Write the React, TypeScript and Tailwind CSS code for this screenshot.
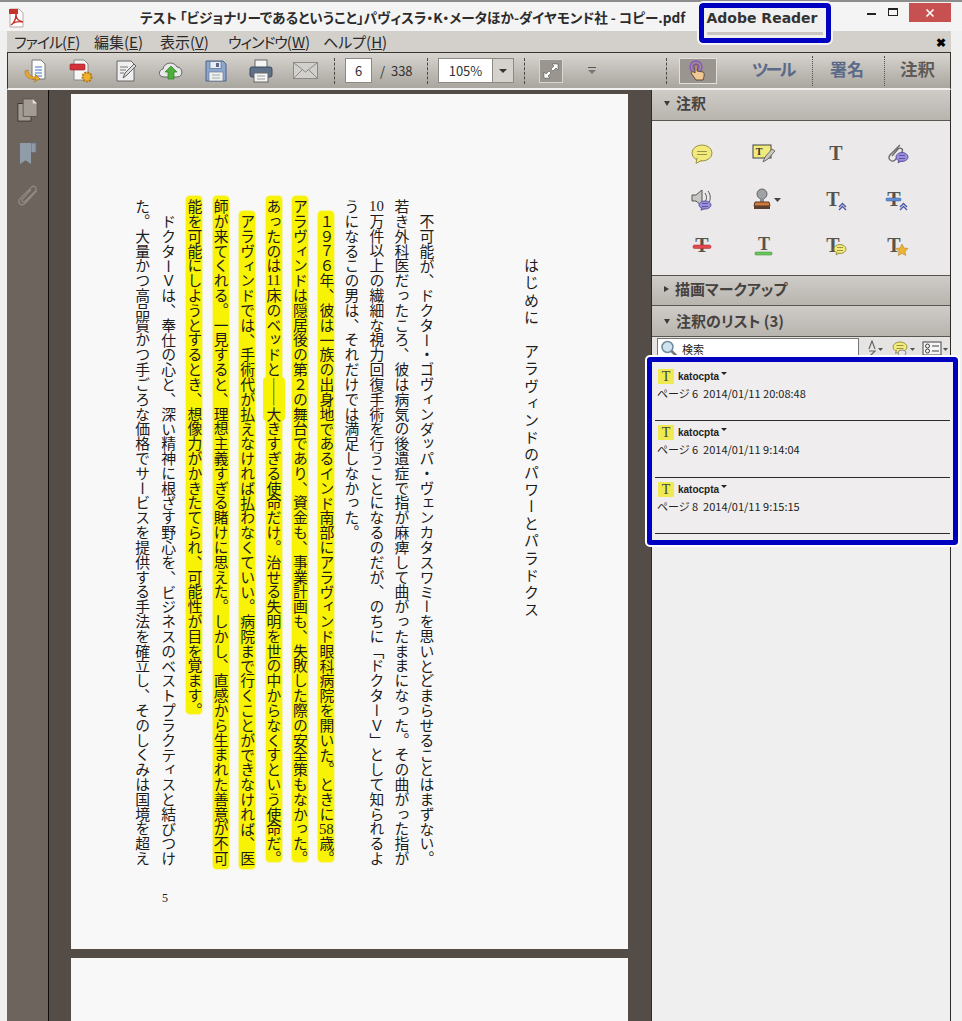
import type { ReactNode } from "react";

const ui = "font-['Noto_Sans_CJK_JP','Liberation_Sans',sans-serif] [font-feature-settings:'palt']";
const book = "font-['Noto_Sans_CJK_JP','Liberation_Serif',serif]";

function Num({ children }: { children: ReactNode }) {
  return <span className="font-['Liberation_Serif',serif] leading-none [text-combine-upright:all]">{children}</span>;
}

// closing mark: the marker stroke stops at the glyph, not at the end of its cell
function Stop() {
  return <span className="-mb-[7px]">。</span>;
}

// one vertical line of the book page
function Line({ indent, wide, children }: { indent?: boolean; wide?: boolean; children: ReactNode }) {
  return <div className={`${wide ? "w-[26px] leading-[26px]" : "w-[25px] leading-[25px]"} h-fit ${indent ? "mt-[15px]" : ""}`}>{children}</div>;
}

// px-* is logical in tailwind 4, so left/right are written out for the vertical text
function Marked({ indent, children }: { indent?: boolean; children: ReactNode }) {
  return (
    <div className={`w-[26.4px] h-fit pl-[5.2px] pr-[5.2px] ${indent ? "mt-[15px]" : ""}`}>
      <div className="h-fit pt-[3px] pb-[3px] -mt-[3px] leading-[16px] whitespace-nowrap bg-[#f8f205] rounded-[4px] shadow-[0_0_1px_1px_#f8f20566]">{children}</div>
    </div>
  );
}

function Doc() {
  return (
    <div className="w-[557px] h-[855px] ml-[22px] mt-[4px] bg-[#f8f8f8] flex flex-col text-[#1c1c1c]">
      <div className={`${book} flex justify-end pt-[105px] pr-[84px] text-[14.82px] h-[790px]`}>
        <div className="[writing-mode:vertical-rl] h-[700px]">
          <div className="w-[26px] h-fit leading-[26px] mt-[59px] ml-[78.5px] text-[15px] tracking-[2.2px]">はじめに　アラヴィンドのパワーとパラドクス</div>
          <Line indent>不可能が、ドクター・ゴヴィンダッパ・ヴェンカタスワミーを思いとどまらせることはまずない。</Line>
          <Line>若き外科医だったころ、彼は病気の後遺症で指が麻痺して曲がったままになった。その曲がった指が</Line>
          <Line><Num>10</Num>万件以上の繊細な視力回復手術を行うことになるのだが、のちに「ドクターＶ」として知られるよ</Line>
          <Line>うになるこの男は、それだけでは満足しなかった。</Line>
          <Marked indent>１９７６年、彼は一族の出身地であるインド南部にアラヴィンド眼科病院を開いた。ときに<Num>58</Num>歳<Stop /></Marked>
          <Marked>アラヴィンドは隠居後の第２の舞台であり、資金も、事業計画も、失敗した際の安全策もなかった<Stop /></Marked>
          <Marked>
            あったのは<Num>11</Num>床のベッドと<span className="inline-block pl-[3px] pr-[3px] -ml-[3px] -mr-[3px] bg-[#f8f205] rounded-[4px]">――大</span>きすぎる使命だけ。治せる失明を世の中からなくすという使命だ<Stop />
          </Marked>
          <Marked indent>アラヴィンドでは、手術代が払えなければ払わなくていい。病院まで行くことができなければ、医</Marked>
          <Marked>師が来てくれる。一見すると、理想主義すぎる賭けに思えた。しかし、直感から生まれた善意が不可</Marked>
          <Marked>能を可能にしようとするとき、想像力がかきたてられ、可能性が目を覚ます<Stop /></Marked>
          <Line wide indent>ドクターＶは、奉仕の心と、深い精神に根ざす野心を、ビジネスのベストプラクティスと結びつけ</Line>
          <Line wide>た。大量かつ高品質かつ手ごろな価格でサービスを提供する手法を確立し、そのしくみは国境を超え</Line>
        </div>
      </div>
      <div className="font-['Liberation_Serif',serif] ml-[91px] mt-[7px] text-[12px] leading-[14px]">5</div>
    </div>
  );
}

function PdfLogo() {
  return (
    <svg width="18" height="20" viewBox="0 0 18 20">
      <path d="M2 1h9l4 4v14H2z" fill="#fff" stroke="#b9a9a9" />
      <path d="M1 1h9v5H1z" fill="#c8322b" />
      <path d="M3 17c3-2 5-6 5-11 0 5 2 7 7 8-5-1-9 0-12 3z" fill="none" stroke="#c8322b" strokeWidth="1.4" />
    </svg>
  );
}

function TitleBar() {
  return (
    <div className="h-[31px] flex items-center shrink-0 bg-[#f4f4f4] border-t-2 border-[#8d8d8d]">
      <div className="w-[140px] pl-[8px] mt-[2px]">
        <PdfLogo />
      </div>
      <div className={`${ui} font-bold text-[13.6px] text-[#2c2c2c] whitespace-nowrap w-[560px] leading-[20px]`}>
        テスト 「ビジョナリーであるということ」パヴィスラ・K・メータほか-ダイヤモンド社 - コピー.pdf
      </div>
      <div className="flex-1 flex items-start self-start">
        <div className="ml-[167px] mt-[11px] w-[9px] h-[2px] bg-[#222]" />
        <div className="ml-[12px] mt-[6px] w-[10px] h-[8px] border border-[#222] border-t-2 bg-[#f4f4f4]" />
        <div className="ml-[11px] mt-[1px] w-[42px] h-[19px] bg-[#c75050] flex items-center justify-center">
          <svg width="10" height="10" viewBox="0 0 10 10"><path d="M1.5 1.5l7 7M8.5 1.5l-7 7" stroke="#fff" strokeWidth="1.6" /></svg>
        </div>
      </div>
    </div>
  );
}

function MenuItem({ label, k, w, narrow }: { label: string; k: string; w: string; narrow?: boolean }) {
  return (
    <span className={`${w} whitespace-nowrap`}>
      <span className={narrow ? "tracking-[-1px]" : ""}>{label}</span>(<span className="underline">{k}</span>)
    </span>
  );
}

function MenuBar() {
  return (
    <div className={`${ui} h-[21px] flex items-center pl-[7px] bg-[#d3d0cb] text-[15px] text-[#2a2a2a] leading-[20px]`}>
      <MenuItem label="ファイル" k="F" w="w-[80px]" narrow />
      <MenuItem label="編集" k="E" w="w-[66px]" />
      <MenuItem label="表示" k="V" w="w-[68px]" />
      <MenuItem label="ウィンドウ" k="W" w="w-[95px]" narrow />
      <MenuItem label="ヘルプ" k="H" w="w-[80px]" />
      <span className="ml-auto mr-[5px] text-[12px] font-bold text-black">✖</span>
    </div>
  );
}

function ToolIcon({ children }: { children: ReactNode }) {
  return <div className="w-[45px] flex justify-center">{children}</div>;
}

function Sep({ ml }: { ml: string }) {
  return <div className={`${ml} h-[26px] w-px border-l border-dashed border-[#4c4945]`} />;
}

function Toolbar() {
  return (
    <div className={`${ui} h-[38px] flex items-center border-t border-b-2 border-[#37332f] border-b-[#f2f1ef] border-x border-x-[#37332f] bg-gradient-to-b from-[#d8d5d0] to-[#a9a59f] pl-[5px] text-[#333]`}>
      <ToolIcon>
        <svg width="26" height="26" viewBox="0 0 26 26">
          <path d="M9 2h9l4 4v15H9z" fill="#fbfbfb" stroke="#777" />
          <path d="M12 9h7M12 12h7M12 15h7M12 18h7" stroke="#3f76c6" />
          <path d="M2 13c0 5 3 9 11 8l-2 3 6-3-5-5 1 3C8 19 5 17 5 12z" fill="#e9a92e" stroke="#a86f12" strokeWidth=".6" />
        </svg>
      </ToolIcon>
      <ToolIcon>
        <svg width="26" height="26" viewBox="0 0 26 26">
          <path d="M6 2h10l4 4v16H6z" fill="#f6f6f6" stroke="#888" />
          <rect x="2" y="6" width="15" height="6" rx="1" fill="#d4333a" stroke="#8f1d22" strokeWidth=".6" />
          <circle cx="19" cy="19" r="4.5" fill="#eeb12d" stroke="#b4781a" strokeWidth="2" strokeDasharray="2 1" />
        </svg>
      </ToolIcon>
      <ToolIcon>
        <svg width="24" height="24" viewBox="0 0 24 24">
          <path d="M3 2h14l3 3v17H3z" fill="#efefef" stroke="#666" />
          <path d="M6 8h8M6 11h6M6 14h4" stroke="#777" />
          <path d="M9 19l2-5 9-9 2 2-9 9z" fill="#dcdcdc" stroke="#555" strokeWidth=".9" />
        </svg>
      </ToolIcon>
      <ToolIcon>
        <svg width="26" height="24" viewBox="0 0 26 24">
          <path d="M6 18c-6 0-6-7-1-8 1-7 11-8 14-2 6 0 7 10 0 10z" fill="#e8e8e8" stroke="#666" />
          <path d="M13 7l6 6h-3v7h-6v-7H7z" fill="#4fae3b" stroke="#2f7d22" strokeWidth=".7" />
        </svg>
      </ToolIcon>
      <ToolIcon>
        <svg width="22" height="22" viewBox="0 0 22 22">
          <path d="M1 1h17l3 3v17H1z" fill="#8ba6cf" stroke="#4d6287" />
          <rect x="5" y="1.5" width="11" height="7" fill="#e8edf4" stroke="#5a6b88" strokeWidth=".7" />
          <rect x="11" y="3" width="3" height="4" fill="#5a6b88" />
          <rect x="4" y="12" width="14" height="9" fill="#f0f0f0" stroke="#6d7b92" strokeWidth=".7" />
          <path d="M7 15h8M7 18h8" stroke="#9aa" />
        </svg>
      </ToolIcon>
      <ToolIcon>
        <svg width="24" height="24" viewBox="0 0 24 24">
          <rect x="6" y="1" width="12" height="8" fill="#f5f5f5" stroke="#666" />
          <rect x="1" y="8" width="22" height="10" rx="2" fill="#5e7187" stroke="#3c4b5c" />
          <rect x="5" y="14" width="14" height="9" fill="#f5f5f5" stroke="#666" />
          <path d="M8 17h8M8 20h8" stroke="#999" />
        </svg>
      </ToolIcon>
      <ToolIcon>
        <svg width="25" height="17" viewBox="0 0 25 17">
          <rect x=".5" y=".5" width="24" height="16" fill="#d2d0cc" stroke="#8d8a86" />
          <path d="M1 1l11.500 9L24 1M1 16l8-8M24 16l-8-8" fill="none" stroke="#8d8a86" />
        </svg>
      </ToolIcon>
      <Sep ml="ml-[6px]" />
      <div className="ml-[10px] w-[27px] h-[25px] bg-white border border-[#8d8a85] flex items-center justify-center text-[13px]">6</div>
      <div className="ml-[8px] w-[47px] text-[13px] whitespace-nowrap">/&nbsp;&nbsp;338</div>
      <Sep ml="ml-[0px]" />
      <div className="ml-[10px] w-[76px] h-[25px] flex border border-[#8d8a85] text-[13px]">
        <div className="w-[54px] bg-white flex items-center justify-center border-r border-[#8d8a85]">105%</div>
        <div className="flex-1 bg-[#d5d2cd] flex items-center justify-center">
          <div className="border-x-[4px] border-x-transparent border-t-[4px] border-t-[#333]" />
        </div>
      </div>
      <Sep ml="ml-[10px]" />
      <div className="ml-[14px] w-[24px] h-[24px] bg-[#9a958f] border border-[#d8d6d2] flex items-center justify-center">
        <svg width="18" height="18" viewBox="0 0 18 18">
          <path d="M10 2h6v6l-2-2-3 3-2-2 3-3zM8 16H2v-6l2 2 3-3 2 2-3 3z" fill="#fff" stroke="#444" strokeWidth=".5" />
        </svg>
      </div>
      <div className="ml-[24px] flex flex-col items-center gap-[2px] w-[9px]">
        <div className="w-[8px] h-px bg-[#555]" />
        <div className="border-x-[4px] border-x-transparent border-t-[4px] border-t-[#777]" />
      </div>
      <Sep ml="ml-[70px]" />
      <div className="ml-[12px] w-[38px] h-[26px] bg-[#9a958f] border border-[#e2e0dc] flex items-center justify-center">
        <svg width="22" height="22" viewBox="0 0 22 22">
          <circle cx="9" cy="7" r="6" fill="none" stroke="#8a59b8" strokeWidth="1.5" />
          <circle cx="9" cy="7" r="3" fill="none" stroke="#8a59b8" strokeWidth="1.500" />
          <path d="M8 6c0-2 2-2 2 0v5l6 1c2 1 1 5 0 8H9L4 13c1-2 3-1 4 0z" fill="#f1c893" stroke="#4a3522" strokeWidth=".8" />
        </svg>
      </div>
      <div className="ml-[35px] w-[42px] mb-[3px] text-[17px] tracking-[-2.5px] font-bold text-[#5b6a88] whitespace-nowrap">ツール</div>
      <div className="ml-[18px] h-[30px] border-l border-dotted border-[#55514c]" />
      <div className="ml-[17px] w-[37px] mb-[3px] text-[17px] font-bold text-[#5b6a88] whitespace-nowrap">署名</div>
      <div className="ml-[17px] h-[30px] border-l border-dotted border-[#55514c]" />
      <div className="ml-[15px] w-[37px] mb-[3px] text-[17.500px] font-bold text-[#5f5b56] whitespace-nowrap">注釈</div>
    </div>
  );
}

function Rail() {
  return (
    <div className="w-[42px] shrink-0 bg-[#6d645d] border-r border-[#0e0d0c] flex flex-col items-center gap-[20px] pt-[8px]">
      <svg width="21" height="24" viewBox="0 0 24 26" preserveAspectRatio="none">
        <rect x="1" y="6" width="15" height="19" fill="#a29c94" stroke="#37322e" />
        <path d="M7 1h11l5 5v14H7z" fill="#a29c94" stroke="#5a534d" />
        <path d="M18 1v5h5z" fill="#e4e0da" />
      </svg>
      <svg width="18" height="23" viewBox="0 0 18 24" preserveAspectRatio="none">
        <path d="M12 1h5v10h-5z" fill="#8e9aa6" stroke="#6a7078" />
        <path d="M1 1h11v22l-5.500-4L1 23z" fill="#909ca8" />
      </svg>
      <svg width="22" height="23" viewBox="0 0 22 24" fill="none" stroke="#918b84" strokeWidth="1.3">
        <path d="M20 6L8 19c-4 4-9-1-5-5L15 2c2-2 6 1 4 4L8 17c-2 2-4 0-3-2l9-10" />
      </svg>
    </div>
  );
}

function SectionHead({ open, label, h }: { open: boolean; label: string; h: string }) {
  return (
    <div className={`${h} flex items-center pl-[12px] gap-[6px] bg-gradient-to-b from-[#cfccc8] to-[#b8b4ae] border-b border-[#5a5650]`}>
      {open ? (
        <div className="border-x-[3.5px] border-x-transparent border-t-[5px] border-t-[#3e3b38]" />
      ) : (
        <div className="border-y-[3.5px] border-y-transparent border-l-[5px] border-l-[#3e3b38]" />
      )}
      <span className="text-[15px] font-bold text-[#454240] whitespace-nowrap">{label}</span>
    </div>
  );
}

function Serif({ x = 12, y = 19, size = 20 }: { x?: number; y?: number; size?: number }) {
  return (
    <text x={x} y={y} textAnchor="middle" fontFamily="Liberation Serif, serif" fontWeight="700" fontSize={size} fill="#57534f">
      T
    </text>
  );
}

function Chevrons() {
  return <path d="M15 20l3.500-3.500L22 20M15 23l3.500-3.500L22 23" fill="none" stroke="#4a55a8" strokeWidth="1.300" />;
}

function Bubble({ cx = 12, cy = 12, rx = 10, ry = 8, fill = "#f2ea7c", stroke = "#9c9344" }: { cx?: number; cy?: number; rx?: number; ry?: number; fill?: string; stroke?: string }) {
  return (
    <>
      <ellipse cx={cx} cy={cy} rx={rx} ry={ry} fill={fill} stroke={stroke} />
      <path d={`M${cx - rx * 0.5} ${cy + ry * 0.6}l-1 ${ry * 0.7}l${rx * 0.6} -${ry * 0.4}`} fill={fill} stroke={stroke} />
      <path d={`M${cx - rx * 0.5} ${cy - 1.500}h${rx} M${cx - rx * 0.5} ${cy + 1.500}h${rx}`} stroke={stroke} />
    </>
  );
}

const noteIcons: ReactNode[] = [
  <Bubble key="note" />,
  <g key="box">
    <rect x="1" y="4" width="18" height="13" fill="#f2ea7c" stroke="#444" />
    <text x="7" y="14" textAnchor="middle" fontFamily="Liberation Serif, serif" fontWeight="700" fontSize="10" fill="#333">T</text>
    <path d="M11 21l2-5 7-8 3 2-7 8z" fill="#c9c6c0" stroke="#555" strokeWidth=".8" />
  </g>,
  <Serif key="t" />,
  <g key="clip">
    <path d="M15 4L5 14c-3 4 2 8 5 5l7-8c2-3-2-5-4-3l-6 7" fill="none" stroke="#666" strokeWidth="1.300" />
    <Bubble cx={17} cy={16} rx={6} ry={4.500} fill="#9a90dd" stroke="#5e549f" />
  </g>,
  <g key="sound">
    <path d="M2 8h4l6-5v16l-6-5H2z" fill="#c9c7c4" stroke="#555" />
    <path d="M15 6c2 3 2 6 0 9M18 4c3 4 3 9 0 13" fill="none" stroke="#555" />
    <Bubble cx={15} cy={18} rx={6} ry={4} fill="#9a90dd" stroke="#5e549f" />
  </g>,
  <g key="stamp">
    <circle cx="10" cy="7" r="5" fill="#9fa3a6" stroke="#666" />
    <path d="M8 11h4v4H8z" fill="#8c9094" />
    <path d="M3 15h14l1 4H2z" fill="#d27a3e" stroke="#5b3a20" />
    <rect x="2" y="19" width="16" height="3" fill="#5b4030" />
    <path d="M22 11h7l-3.500 4z" fill="#444" />
  </g>,
  <g key="caret"><Serif x={9} y={19} /><Chevrons /></g>,
  <g key="replace">
    <Serif x={9} y={19} />
    <rect x="1" y="11" width="15" height="3" rx="1" fill="#5f8fd6" stroke="#3a5f99" strokeWidth=".5" />
    <Chevrons />
  </g>,
  <g key="strike">
    <Serif />
    <rect x="3" y="12" width="18" height="3.500" rx="1.500" fill="#e2484f" stroke="#a82a30" strokeWidth=".5" />
  </g>,
  <g key="under">
    <Serif y={17} size={18} />
    <rect x="3" y="19" width="17" height="3" rx="1" fill="#67c95c" stroke="#38852f" strokeWidth=".5" />
  </g>,
  <g key="tnote"><Serif x={9} y={19} /><Bubble cx={16} cy={16} rx={6} ry={4.500} /></g>,
  <g key="tstar">
    <Serif x={9} y={19} />
    <path d="M17 11l2 4 4 .5-3 3 .8 4-3.800-2-3.800 2 .8-4-3-3 4-.5z" fill="#eeb334" stroke="#a9791d" strokeWidth=".5" />
  </g>,
];

function ListItem({ page, time }: { page: string; time: string }) {
  return (
    <div className="h-[57px] border-b border-[#2d2b29] bg-[#efeded] pl-[3px] first:h-[56px] last:h-[56px] pt-[4px]">
      <div className="flex items-center h-[15px]">
        <div className="w-[16px] h-[15px] bg-[#eeea50] flex items-center justify-center font-['Liberation_Serif',serif] text-[14px] text-[#444] leading-none">T</div>
        <span className="ml-[4px] font-['Liberation_Sans',sans-serif] font-bold text-[10px] text-[#222]">katocpta</span>
        <div className="ml-[2px] mb-[6px] border-x-[3px] border-x-transparent border-t-[3px] border-t-[#222]" />
      </div>
      <div className="mt-[2px] -ml-[1px] text-[11px] leading-[14px] text-[#222] whitespace-nowrap">
        ページ {page}&nbsp;&nbsp;{time}
      </div>
    </div>
  );
}

function Panel() {
  return (
    <div className={`${ui} w-[300px] shrink-0 bg-[#f0efef] border-x border-[#2e2b28] flex flex-col`}>
      <SectionHead open label="注釈" h="h-[31px] pb-[3px]" />
      <div className="h-[155px] pl-[38px] pt-[20px] border-b border-[#55514c] bg-[#ebe9e9] grid grid-cols-[62px_72px_61px_24px] grid-rows-[46px_46px_46px]">
        {noteIcons.map((icon, i) => (
          <svg key={i} width="32" height="24" viewBox="0 0 32 24">
            {icon}
          </svg>
        ))}
      </div>
      <SectionHead open={false} label="描画マークアップ" h="h-[30px] pb-[3px]" />
      <SectionHead open label="注釈のリスト (3)" h="h-[31px] pt-[1px]" />
      <div className="h-[30px] flex items-start pl-[5px] bg-[#e6e4e3]">
        <div className="w-[202px] h-[22px] bg-white border border-[#777] flex items-center pl-[2px] gap-[4px] mt-[1px]">
          <svg width="18" height="18" viewBox="0 0 18 18">
            <circle cx="7.500" cy="7" r="5.500" fill="#cfe3ee" stroke="#6f8a9a" strokeWidth="1.500" />
            <path d="M11.500 11l5 5" stroke="#777" strokeWidth="2.500" />
          </svg>
          <span className="text-[11px] text-[#222]">検索</span>
        </div>
        <svg width="20" height="18" viewBox="0 0 20 18" className="ml-[7px] mt-[3px]">
          <path d="M3 9L6 1l3 8M3 11h6L3 17h6" fill="none" stroke="#666" strokeWidth="1.200" />
          <path d="M12 8h5l-2.500 3z" fill="#555" />
        </svg>
        <svg width="28" height="18" viewBox="0 0 28 18" className="ml-[5px] mt-[3px]">
          <Bubble cx={9} cy={7} rx={7} ry={5} />
          <ellipse cx="11" cy="13" rx="4" ry="3" fill="#e8e8e8" stroke="#888" />
          <path d="M19 8h5l-2.500 3z" fill="#555" />
        </svg>
        <svg width="28" height="18" viewBox="0 0 28 18" className="ml-[3px] mt-[3px]">
          <rect x="1" y="2" width="18" height="13" fill="#f5f5f5" stroke="#444" />
          <circle cx="5.500" cy="6" r="2" fill="none" stroke="#444" />
          <circle cx="5.500" cy="11" r="2" fill="none" stroke="#444" />
          <path d="M10 6h7M10 11h7" stroke="#444" />
          <path d="M21 8h5l-2.500 3z" fill="#555" />
        </svg>
      </div>
      {/* blue marker frame drawn over the list in the screenshot */}
      <div className="relative -mt-[10px] -ml-[5px] -mr-[8px] h-[188px] border-[5px] border-[#0000c0] rounded-[3px] outline-2 outline-white bg-[#efeded] px-[3px] pt-[3px]">
        <ListItem page="6" time="2014/01/11 20:08:48" />
        <ListItem page="6" time="2014/01/11 9:14:04" />
        <ListItem page="8" time="2014/01/11 9:15:15" />
      </div>
    </div>
  );
}

export default function App() {
  return (
    <div className="relative w-[962px] h-[1021px] overflow-hidden bg-[#f0f0f0] flex flex-col">
      <TitleBar />
      <div className="ml-[7px] mr-[11px] flex-1 flex flex-col min-h-0">
        <MenuBar />
        <Toolbar />
        <div className="flex-1 flex min-h-0 bg-[#544c46]">
          <Rail />
          <div className="w-[602px] shrink-0 overflow-hidden">
            <Doc />
            <div className="w-[557px] h-[80px] ml-[22px] mt-[9px] bg-[#f8f8f8]" />
          </div>
          <Panel />
        </div>
      </div>
      {/* blue marker frame around the product name */}
      <div className="absolute left-[699px] top-[3px] w-[132px] h-[40px] border-[5px] border-[#0000c0] rounded-[4px] outline-2 outline-[#f4f4f4] bg-[#f0f0f0] flex flex-col items-center">
        <span className="font-['DejaVu_Sans',sans-serif] font-bold text-[14px] leading-[22px] text-[#333] -mt-[1px] pr-[6px]">Adobe Reader</span>
        <div className="w-[116px] h-[3px] bg-[#c9c6c2] mt-[3px]" />
      </div>
    </div>
  );
}
